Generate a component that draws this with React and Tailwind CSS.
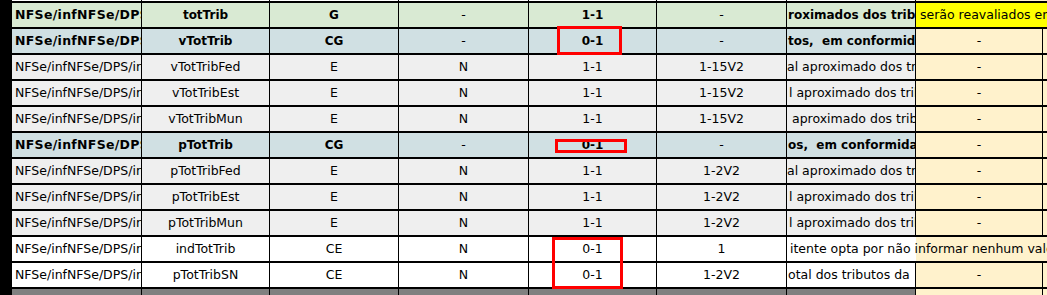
const rows = [
  { kind: "green", bold: true, path: "NFSe/infNFSe/DPS/infDPS/valores/trib/totTrib", tag: "totTrib", ele: "G", tipo: "-", ocor: "1-1", tam: "-", desc: "roximados dos tributos", pl: "pl-[1px]", obs: "serão reavaliados em momento oportuno" },
  { kind: "blue", bold: true, path: "NFSe/infNFSe/DPS/infDPS/valores/trib/totTrib/vTotTrib", tag: "vTotTrib", ele: "CG", tipo: "-", ocor: "0-1", tam: "-", desc: "tos,  em conformidade", pl: "pl-[1px]", obs: "-" },
  { kind: "gray", path: "NFSe/infNFSe/DPS/infDPS/valores", tag: "vTotTribFed", ele: "E", tipo: "N", ocor: "1-1", tam: "1-15V2", desc: "al aproximado dos tributos", pl: "pl-0", obs: "-" },
  { kind: "gray", path: "NFSe/infNFSe/DPS/infDPS/valores", tag: "vTotTribEst", ele: "E", tipo: "N", ocor: "1-1", tam: "1-15V2", desc: "l aproximado dos tributos", pl: "pl-[2px]", obs: "-" },
  { kind: "gray", path: "NFSe/infNFSe/DPS/infDPS/valores", tag: "vTotTribMun", ele: "E", tipo: "N", ocor: "1-1", tam: "1-15V2", desc: "aproximado dos tributos", pl: "pl-[5px]", obs: "-" },
  { kind: "blue", bold: true, path: "NFSe/infNFSe/DPS/infDPS/valores/trib/totTrib/pTotTrib", tag: "pTotTrib", ele: "CG", tipo: "-", ocor: "0-1", tam: "-", desc: "os,  em conformidade", pl: "pl-[1px]", obs: "-" },
  { kind: "gray", path: "NFSe/infNFSe/DPS/infDPS/valores", tag: "pTotTribFed", ele: "E", tipo: "N", ocor: "1-1", tam: "1-2V2", desc: "al aproximado dos tributos", pl: "pl-0", obs: "-" },
  { kind: "gray", path: "NFSe/infNFSe/DPS/infDPS/valores", tag: "pTotTribEst", ele: "E", tipo: "N", ocor: "1-1", tam: "1-2V2", desc: "l aproximado dos tributos", pl: "pl-[2px]", obs: "-" },
  { kind: "gray", path: "NFSe/infNFSe/DPS/infDPS/valores", tag: "pTotTribMun", ele: "E", tipo: "N", ocor: "1-1", tam: "1-2V2", desc: "l aproximado dos tributos", pl: "pl-[2px]", obs: "-" },
  { kind: "white", path: "NFSe/infNFSe/DPS/infDPS/valores", tag: "indTotTrib", ele: "CE", tipo: "N", ocor: "0-1", tam: "1", desc: "itente opta por não informar nenhum valor estimado para os tributos", pl: "pl-[3px]", obs: null },
  { kind: "white", path: "NFSe/infNFSe/DPS/infDPS/valores", tag: "pTotTribSN", ele: "CE", tipo: "N", ocor: "0-1", tam: "1-2V2", desc: "otal dos tributos da", pl: "pl-[1px]", obs: "-" },
];

const bgs = {
  green: "bg-[#d9ead3]",
  blue: "bg-[#d0e0e3]",
  gray: "bg-[#efefef]",
  white: "bg-white",
};

const gridCols = "grid grid-cols-[130px_128px_129px_130px_128px_130px_129px_127px_1fr]";
const cell = "flex items-center justify-center border-r border-black overflow-hidden whitespace-nowrap";

const Row = ({ r }) => {
  const b = r.bold ? "font-bold text-[12px]" : "";

  return (
    <div className={`${gridCols} h-[26px] border-b-2 border-black ${bgs[r.kind]}`}>
      <div
        className={`flex items-center pl-[3px] border-r border-black overflow-hidden whitespace-nowrap ${
          r.bold ? "font-bold tracking-[0.3px]" : ""
        }`}
      >
        {r.path}
      </div>
      <div className={`${cell} ${b}`}>{r.tag}</div>
      <div className={`${cell} ${b}`}>{r.ele}</div>
      <div className={cell}>{r.tipo}</div>
      <div className={`${cell} ${b}`}>{r.ocor}</div>
      <div className={cell}>{r.tam}</div>

      {r.obs === null ? (
        <>
          <div className="flex items-center whitespace-pre">
            <span className={`relative z-10 ${r.pl}`}>{r.desc}</span>
          </div>
          <div className="col-span-2 bg-[#fff2cc]"></div>
        </>
      ) : (
        <>
          <div className={`flex items-center border-r border-black overflow-hidden whitespace-pre ${r.pl} ${b}`}>
            {r.desc}
          </div>
          {r.kind === "green" ? (
            <div className="col-span-2 flex items-center pl-1 bg-[#ffff00] overflow-hidden whitespace-nowrap">
              {r.obs}
            </div>
          ) : (
            <>
              <div className={`${cell} bg-[#fff2cc]`}>{r.obs}</div>
              <div className="bg-[#fff2cc]"></div>
            </>
          )}
        </>
      )}
    </div>
  );
};

const EdgeRow = ({ h, fill }) => (
  <div className={`${gridCols} ${h}`}>
    {[0, 1, 2, 3, 4, 5, 6].map((i) => (
      <div key={i} className={`border-r border-black ${fill}`}></div>
    ))}
    <div className="border-r border-black bg-[#fff2cc]"></div>
    <div className="bg-[#fff2cc]"></div>
  </div>
);

export default function App() {
  return (
    <div
      className="relative w-[1047px] h-[295px] overflow-hidden flex bg-white text-black text-[12.5px] leading-none"
      style={{ fontFamily: '"DejaVu Sans", Verdana, sans-serif' }}
    >
      <div className="w-[12px] shrink-0 bg-black"></div>

      <div className="flex-1 flex flex-col">
        <div className={`${gridCols} h-[3px] border-b-2 border-black`}>
          {[0, 1, 2, 3, 4, 5, 6].map((i) => (
            <div key={i} className="border-r border-black bg-white"></div>
          ))}
          <div className="col-span-2 bg-[#fff2cc]"></div>
        </div>

        {rows.map((r) => (
          <Row key={r.tag} r={r} />
        ))}

        <EdgeRow h="h-[6px]" fill="bg-[#808080]" />
      </div>

      {/* red highlight boxes */}
      <div className="absolute left-[557px] top-[26px] w-[65px] h-[29px] border-[3px] border-[#ff0000]"></div>
      <div className="absolute left-[555px] top-[139px] w-[72px] h-[14px] border-[3px] border-[#ff0000]"></div>
      <div className="absolute left-[552px] top-[237px] w-[71px] h-[52px] border-[3px] border-[#ff0000]"></div>
    </div>
  );
}
